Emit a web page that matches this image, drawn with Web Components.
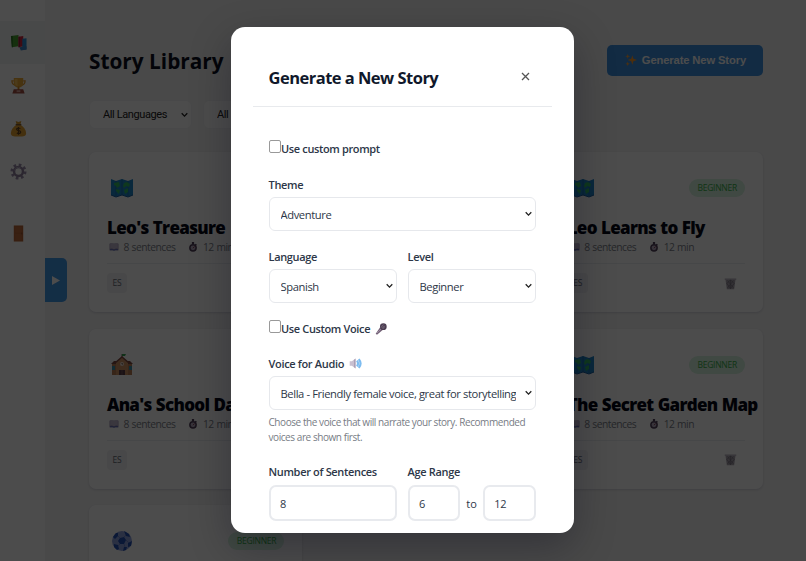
<!DOCTYPE html>
<html lang="en">
<head>
<meta charset="utf-8">
<title>Story Library</title>
<style>
  body {
    margin: 0;
    width: 806px;
    height: 561px;
    overflow: hidden;
    background: #f5f5f6;
    font-family: "Open Sans", "Noto Sans", sans-serif;
    color: #2d3748;
  }
</style>
</head>
<body>
<story-app></story-app>

<script>
const icons = {
  books: '<path d="M1 2l8-1v12l-7 1z" fill="#48a02f"/><path d="M1 2l2 0v12H2z" fill="#2b7524"/><path d="M9 3l5-1v11l-5 1z" fill="#d3263f"/><path d="M9 3h1.500v11H9z" fill="#941c3d"/><path d="M13 5l4.500-.5v12l-4.500.5z" fill="#2d91d8"/><path d="M10 14l7.500-1v3.500l-6 1z" fill="#3f86c8"/>',
  trophy: '<path d="M4 4H2q0 4 4 5M14 4h2q0 4-4 5" fill="none" stroke="#e4982b" stroke-width="1.300"/><path d="M4 1h10v5q0 5-5 5T4 6z" fill="#efaa36"/><path d="M5 2h3v8Q5 8 5 6z" fill="#ffc75a"/><path d="M8 10h2v4H8z" fill="#d28720"/><path d="M4 13h10l1.500 4.500h-13z" fill="#a34e42"/><path d="M7 14h4v2H7z" fill="#d9a198"/>',
  money: '<path d="M6 1l3 1 3-1-1 4H7z" fill="#d99a2b"/><path d="M7 5h4c3 2 6 5 6 9 0 3-2 3.500-8 3.500S1 17 1 14c0-4 3-7 6-9z" fill="#e4a031"/><path d="M6 5h6" stroke="#78502b" stroke-width="1.300"/><path d="M11 9Q9 8 7.500 9t1.300 2.300q3.200.4 2.400 2.200-1.700 1.500-4 .2M9 7.500v8" fill="none" stroke="#614323" stroke-width="1.200"/>',
  gear: '<circle cx="9" cy="9" r="7" fill="none" stroke="#9b8cab" stroke-width="3" stroke-dasharray="2.750 2.750"/><circle cx="9" cy="9" r="4.700" fill="none" stroke="#8f809e" stroke-width="2.600"/><path d="M5 8a4 4 0 0 1 6-3" fill="none" stroke="#b9adc4"/>',
  door: '<path d="M4 .5h10v17H4z" fill="#b96436"/><path d="M5.500 2h7v6h-7zM5.500 9.500h7V16h-7z" fill="#c06c3c"/><path d="M12.500 8v2" stroke="#8c5030"/>',
  map: '<path d="M0 2l5 2 6-2 6 2 5-2v16l-5 2-6-2-6 2-5-2z" fill="#1f86c8"/><path d="M5 4v15M11 2v16M17 4v15" stroke="#1a71a8" stroke-width=".7"/><path d="M3 6l5-1 1 4-3 2-1-2-2-1zM5 12l4 1-1 4-3-3zM13 6l3-1 3 2-1 3-3-1-2 2-1-2zM13 13l4-2v4l-3 2z" fill="#33bb66"/><path d="M0 18l5 2 6-2 6 2 5-2" fill="none" stroke="#1b5fa0"/>',
  school: '<path d="M11 0v5" stroke="#7f6b64"/><path d="M11 0h4l-1 2h-3z" fill="#38a253"/><path d="M1 10h20v11H1z" fill="#b97c54"/><path d="M0 10l3-3h16l3 3z" fill="#7c4a42"/><path d="M5 8l6-5 6 5v13H5z" fill="#d19567"/><path d="M4 9l7-6 7 6" fill="none" stroke="#7f4841" stroke-width="1.500"/><circle cx="11" cy="10" r="2" fill="#ead8cb"/><path d="M11 9v1h1" fill="none" stroke="#765"/><path d="M8 16h6v5H8z" fill="#5c3d48"/><path d="M1 12h3v4H1zM18 12h3v4h-3z" fill="#3a92ac"/><path d="M11 16v5" stroke="#896b69" stroke-width=".6"/>',
  ball: '<circle cx="11" cy="11" r="10" fill="#8ea0dc"/><path d="M9 8l4-1 2 3-2 4-4 0-2-3zM2 7l3-4 2 0 0 3-3 3zM13 1l5 3 1 3-4-1zM21 11l-1 5-3 1 0-4zM3 14l4 1 1 4-2 1-3-3zM13 17l3 0-1 3-3 1z" fill="#2450b4"/><path d="M9 8L7 6M13 7l2-2M15 10l3 3M13 14l1 3M9 14l-2 2" stroke="#6078c0" stroke-width=".7"/>',
  read: '<path d="M1 3h16v12H1z" fill="#8d7fa8"/><path d="M2 2q4-1 7 1v10q-3-2-7-1zM16 2q-4-1-7 1v10q3-2 7-1z" fill="#c3bad0"/><path d="M2 14q4-1 7 1 3-2 7-1" fill="none" stroke="#546ac0" stroke-width="1.500"/>',
  timer: '<path d="M7 0h4v4H7zM14 3l2 2-2 2-2-2z" fill="#51415c"/><circle cx="9" cy="10.500" r="7" fill="#51405b"/><circle cx="9" cy="10.500" r="4.300" fill="#b9aec4"/><path d="M9 11l3-3" stroke="#7f2c45" stroke-width="1.600"/>',
  spark: '<path d="M11 2l1.700 5.300L18 9l-5.300 1.700L11 16l-1.700-5.300L4 9l5.300-1.700z" fill="#ff9b2c"/><path d="M4 0l.9 2.600 2.600.9-2.600.9L4 7l-.9-2.600-2.600-.9 2.600-.9zM4 11.500l.9 2.300 2.300.9-2.300.9L4 18l-.9-2.400-2.300-.9 2.300-.9z" fill="#f6a039"/>',
  trash: '<path d="M2 3h14l-2 14H4z" fill="#aaa4b0"/><path d="M1 2h16v2H1z" fill="#bcb6c2"/><path d="M5 5l8 10M13 5L5 15M9 4v12M4 9l5-5 5 5-5 7z" fill="none" stroke="#77717d" stroke-width=".9"/>',
  mic: '<path d="M1 16l7-10 4 4-9 7.500z" fill="#746277"/><path d="M3 15l7-7" stroke="#a594a8" stroke-width="1.200"/><circle cx="12.500" cy="5.500" r="5" fill="#4b3c50"/><path d="M9 5l5 4M10 3l5 4M13 2L9 7M15 4l-4 5" stroke="#887c8e" stroke-width=".6"/>',
  speaker: '<path d="M1 6h3l5-4v14l-5-4H1z" fill="#c8bfd0"/><path d="M7 4l2-2v14l-2-2z" fill="#a99eb5"/><path d="M11 5q3 4 0 8M13.500 3q5 6 0 12" fill="none" stroke="#7dbcf0" stroke-width="3"/>'
};

class EmojiIcon extends HTMLElement {
  connectedCallback() {
    const name = this.getAttribute('name');
    const big = ['map', 'school', 'ball'].includes(name);
    this.attachShadow({ mode: 'open' }).innerHTML = `
      <style>
        :host { display: inline-block; flex: none; width: 18px; height: 18px; }
        svg { display: block; width: 100%; height: 100%; }
      </style>
      <svg viewBox="0 0 ${big ? '22 22' : '18 18'}">${icons[name]}</svg>
    `;
  }
}
customElements.define('emoji-icon', EmojiIcon);

class SideNav extends HTMLElement {
  connectedCallback() {
    this.attachShadow({ mode: 'open' }).innerHTML = `
      <style>
        :host { display: block; box-sizing: border-box; width: 45px; height: 561px; padding-top: 21px; background: #fff; flex: none; }
        a { display: flex; height: 43px; align-items: center; justify-content: center; padding-right: 9px; }
        a.current { background: #f2f3f4; }
        a.logout { margin-top: 19px; }
        emoji-icon { width: 17px; height: 17px; }
      </style>
      <nav>
        <a class="current"><emoji-icon name="books"></emoji-icon></a>
        <a><emoji-icon name="trophy"></emoji-icon></a>
        <a><emoji-icon name="money"></emoji-icon></a>
        <a><emoji-icon name="gear"></emoji-icon></a>
        <a class="logout"><emoji-icon name="door"></emoji-icon></a>
      </nav>
    `;
  }
}
customElements.define('side-nav', SideNav);

// Closed state of a dropdown, the value goes in the slot
class SelectBox extends HTMLElement {
  connectedCallback() {
    this.attachShadow({ mode: 'open' }).innerHTML = `
      <style>
        :host {
          display: flex;
          box-sizing: border-box;
          align-items: center;
          height: 34px;
          padding: 0 3px 0 11px;
          border: 1px solid #e6e8ec;
          border-radius: 6px;
          background: #fff;
          font-size: 11.2px;
          letter-spacing: -.39px;
        }
        span { flex: 1; overflow: hidden; white-space: nowrap; margin-right: 9px; line-height: 20px; padding-top: 1px; }
        svg { flex: none; width: 7px; height: 6px; }
      </style>
      <span><slot></slot></span>
      <svg viewBox="0 0 7 6"><path d="M.7 1.200l2.800 2.900 2.800-2.900" fill="none" stroke="#222" stroke-width="1.300"/></svg>
    `;
  }
}
customElements.define('select-box', SelectBox);

class StoryCard extends HTMLElement {
  connectedCallback() {
    const level = this.getAttribute('level');
    this.attachShadow({ mode: 'open' }).innerHTML = `
      <style>
        :host {
          display: block;
          box-sizing: border-box;
          height: 160px;
          padding: 25px 18px 0;
          background: #fff;
          border-radius: 7px;
          box-shadow: 0 1px 3px rgba(0, 0, 50, .14);
          min-width: 0;
        }
        .top { display: flex; justify-content: space-between; align-items: center; height: 22px; padding-left: 4px; }
        .top emoji-icon { width: 22px; height: 22px; }
        .level { padding: 0 8px 0 8.5px; border-radius: 9px; background: #d6f3df; color: #38b249; font-size: 8.5px; line-height: 18px; letter-spacing: -.25px; }
        h3 { height: 24px; margin: 17px 0 0; font-size: 17px; line-height: 24px; font-weight: 800; letter-spacing: -.69px; word-spacing: .5px; color: #050817; white-space: nowrap; }
        .meta { display: flex; align-items: center; height: 14px; font-size: 10.3px; letter-spacing: -.5px; word-spacing: .5px; color: #7c818a; padding-left: 2px; }
        .meta emoji-icon { width: 10px; height: 10px; margin-right: 4.5px; }
        .meta span { margin-right: 13px; white-space: nowrap; }
        .foot { display: flex; justify-content: space-between; align-items: center; margin-top: 9px; padding: 9px 8px 0 0; border-top: 1px solid #eceef1; }
        .lang { padding: 0 5.5px; border-radius: 4px; background: #f0f1f4; color: #666c76; font-size: 8.5px; line-height: 20px; letter-spacing: -.2px; }
        .foot emoji-icon { width: 13px; height: 13px; }
      </style>
      <div class="top"><emoji-icon name="${this.getAttribute('icon')}"></emoji-icon>${level ? `<span class="level">${level}</span>` : ''}</div>
      ${this.textContent ? `
      <h3><slot></slot></h3>
      <div class="meta">
        <emoji-icon name="read"></emoji-icon><span>8 sentences</span>
        <emoji-icon name="timer"></emoji-icon><span>12 min</span>
      </div>
      <div class="foot"><span class="lang">ES</span><emoji-icon name="trash"></emoji-icon></div>` : ''}
    `;
  }
}
customElements.define('story-card', StoryCard);

class StoryLibrary extends HTMLElement {
  connectedCallback() {
    this.attachShadow({ mode: 'open' }).innerHTML = `
      <style>
        :host { display: block; box-sizing: border-box; flex: 1; padding: 44px 43px 0 44px; }
        header { display: flex; justify-content: space-between; align-items: center; height: 32px; }
        h1 { margin: 0; padding-top: 2px; font-size: 20.8px; line-height: 32px; font-weight: 700; color: #0b1020; white-space: nowrap; }
        button {
          display: flex;
          align-items: center;
          gap: 5px;
          height: 31px;
          padding: 0 17px 0 18px;
          border: 0;
          border-radius: 5px;
          background: #3c91e2;
          color: #fff;
          font: bold 11.2px "Liberation Sans", sans-serif;
          letter-spacing: -.12px;
          white-space: nowrap;
        }
        button emoji-icon { width: 12px; height: 12px; }
        .filters { display: flex; gap: 11px; margin: 24px 0 23px; }
        select-box { width: 103px; height: 29px; padding-left: 13px; border-color: #f1f2f4; font: 11px Roboto, sans-serif; letter-spacing: -.4px; color: #222; }
        .grid { display: grid; grid-template-columns: repeat(3, 1fr); gap: 16.7px 17px; }
        .last { grid-column: 3; }
      </style>
      <header>
        <h1>Story Library</h1>
        <button><emoji-icon name="spark"></emoji-icon><span>Generate New Story</span></button>
      </header>
      <div class="filters"><select-box>All Languages</select-box><select-box>All Levels</select-box></div>
      <div class="grid">
        <story-card icon="map">Leo's Treasure</story-card>
        <story-card icon="map" level="BEGINNER" class="last">Leo Learns to Fly</story-card>
        <story-card icon="school">Ana's School Day</story-card>
        <story-card icon="map" level="BEGINNER" class="last">The Secret Garden Map</story-card>
        <story-card icon="ball" level="BEGINNER"></story-card>
      </div>
    `;
  }
}
customElements.define('story-library', StoryLibrary);

class FormField extends HTMLElement {
  connectedCallback() {
    this.attachShadow({ mode: 'open' }).innerHTML = `
      <style>
        :host { display: block; flex: 1; min-width: 0; }
        label { display: flex; align-items: center; gap: 5px; height: 16px; margin-bottom: var(--label-gap, 5px); font-size: 11px; font-weight: 600; letter-spacing: -.33px; white-space: nowrap; }
        emoji-icon { width: 13px; height: 13px; }
      </style>
      <label><span>${this.getAttribute('label')}</span>${this.hasAttribute('icon') ? `<emoji-icon name="${this.getAttribute('icon')}"></emoji-icon>` : ''}</label>
      <slot></slot>
    `;
  }
}
customElements.define('form-field', FormField);

class CheckLine extends HTMLElement {
  connectedCallback() {
    this.attachShadow({ mode: 'open' }).innerHTML = `
      <style>
        :host { display: flex; height: 18px; font-size: 11px; font-weight: 600; line-height: 18px; letter-spacing: -.36px; white-space: nowrap; }
        i { box-sizing: border-box; width: 12.5px; height: 13px; border: 1px solid #999; border-radius: 2px; background: #fff; }
        emoji-icon { width: 12px; height: 12px; margin: 3px 0 0 5px; }
      </style>
      <i></i><span><slot></slot></span>${this.hasAttribute('icon') ? `<emoji-icon name="${this.getAttribute('icon')}"></emoji-icon>` : ''}
    `;
  }
}
customElements.define('check-line', CheckLine);

class StoryModal extends HTMLElement {
  connectedCallback() {
    this.attachShadow({ mode: 'open' }).innerHTML = `
      <style>
        :host { position: absolute; inset: 0; display: flex; justify-content: center; align-items: center; background: rgba(0, 0, 0, .7); }
        .dialog {
          box-sizing: border-box;
          width: 343px;
          height: 506px;
          margin: 0 0 1px -2px;
          padding: 22px 22px 0;
          overflow: hidden;
          border-radius: 14px;
          background: #fff;
          box-shadow: 0 14px 42px rgba(0, 0, 20, .3);
        }
        header { display: flex; justify-content: space-between; align-items: center; height: 57px; padding: 0 22px 0 16px; border-bottom: 1px solid #e8eaed; }
        h2 { margin: 0; padding-top: 1px; font-size: 16.5px; line-height: 24px; letter-spacing: -.52px; color: #10182b; white-space: nowrap; }
        header svg { width: 9px; height: 9px; margin: 0 0 2px; }
        form { padding: 33px 16px 0; }
        .first { margin-bottom: 18px; }
        .row { display: flex; gap: 11px; margin: 17px 0; }
        .voice { margin-bottom: 17px; }
        p { margin: 5px 0 18px; font-size: 10px; line-height: 15px; letter-spacing: -.43px; color: #777c85; white-space: nowrap; }
        .numbers { --label-gap: 6px; }
        .input { box-sizing: border-box; flex: 1; height: 36px; padding-left: 9.5px; border: 2px solid #e8eaee; border-radius: 7px; font-size: 11px; line-height: 33px; letter-spacing: -.3px; }
        .range { display: flex; align-items: center; gap: 6px; font-size: 11px; }
      </style>
      <div class="dialog">
        <header>
          <h2>Generate a New Story</h2>
          <svg viewBox="0 0 9 9"><path d="M1 1l7 7M8 1L1 8" stroke="#555" stroke-width="1.300"/></svg>
        </header>
        <form>
          <check-line class="first">Use custom prompt</check-line>
          <form-field label="Theme"><select-box>Adventure</select-box></form-field>
          <div class="row">
            <form-field label="Language"><select-box>Spanish</select-box></form-field>
            <form-field label="Level"><select-box>Beginner</select-box></form-field>
          </div>
          <check-line icon="mic" class="voice">Use Custom Voice</check-line>
          <form-field label="Voice for Audio" icon="speaker"><select-box>Bella - Friendly female voice, great for storytelling</select-box></form-field>
          <p>Choose the voice that will narrate your story. Recommended<br>voices are shown first.</p>
          <div class="row numbers">
            <form-field label="Number of Sentences"><div class="input">8</div></form-field>
            <form-field label="Age Range"><div class="range"><div class="input">6</div><span>to</span><div class="input">12</div></div></form-field>
          </div>
        </form>
      </div>
    `;
  }
}
customElements.define('story-modal', StoryModal);

class StoryApp extends HTMLElement {
  connectedCallback() {
    this.attachShadow({ mode: 'open' }).innerHTML = `
      <style>
        :host { position: relative; display: flex; width: 806px; height: 561px; overflow: hidden; }
        .toggle { position: absolute; left: 45px; top: 258px; width: 22px; height: 44px; display: flex; align-items: center; justify-content: center; border-radius: 0 5px 5px 0; background: #4299e8; }
        .toggle svg { width: 8px; height: 9px; }
      </style>
      <side-nav></side-nav>
      <story-library></story-library>
      <div class="toggle"><svg viewBox="0 0 8 9"><path d="M0 0l8 4.500-8 4.500z" fill="#fff"/></svg></div>
      <story-modal></story-modal>
    `;
  }
}
customElements.define('story-app', StoryApp);
</script>
</body>
</html>
